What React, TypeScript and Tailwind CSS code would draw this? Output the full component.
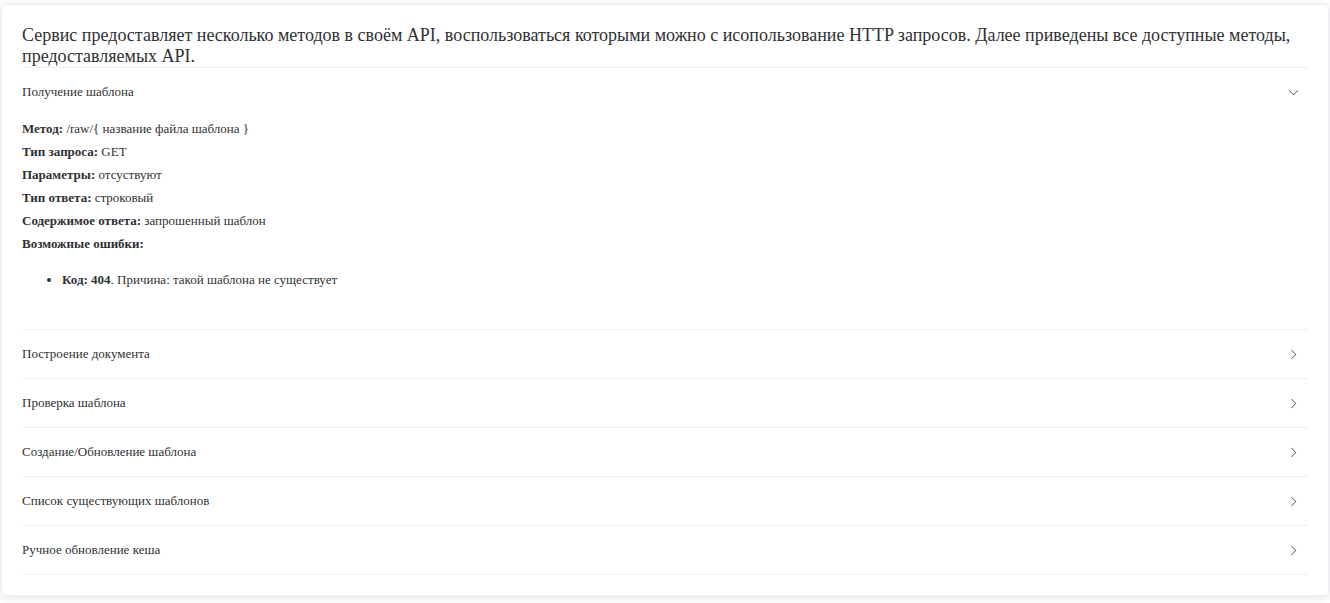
import { useState } from "react";

const sections = [
  "Получение шаблона",
  "Построение документа",
  "Проверка шаблона",
  "Создание/Обновление шаблона",
  "Список существующих шаблонов",
  "Ручное обновление кеша",
];

const details = [
  ["Метод:", "/raw/{ название файла шаблона }"],
  ["Тип запроса:", "GET"],
  ["Параметры:", "отсуствуют"],
  ["Тип ответа:", "строковый"],
  ["Содержимое ответа:", "запрошенный шаблон"],
  ["Возможные ошибки:", ""],
];

function Arrow({ open }: { open: boolean }) {
  return (
    <svg
      viewBox="0 0 1024 1024"
      className={`mr-2 size-[13px] fill-[#505668] ${open ? "rotate-90" : ""}`}
      aria-hidden="true"
    >
      <path d="M340.864 149.312a30.592 30.592 0 0 0 0 42.752L652.736 512 340.864 831.872a30.592 30.592 0 0 0 0 42.752 29.12 29.12 0 0 0 41.728 0L714.24 534.336a32 32 0 0 0 0-44.672L382.592 149.376a29.12 29.12 0 0 0-41.728 0z" />
    </svg>
  );
}

export default function App() {
  const [active, setActive] = useState(0);
  return (
    <main className="px-px pt-1 pb-2 font-['Liberation_Serif',serif] text-[#303133]">
      <div className="rounded border border-[#ebeef5] bg-white p-5 shadow-[0_2px_12px_0_rgba(0,0,0,0.1)]">
        <p className="text-lg leading-[21px]">
          Сервис предоставляет несколько методов в своём API, воспользоваться которыми можно с
          исопользование HTTP запросов. Далее приведены все доступные методы, предоставляемых API.
        </p>
        <div className="border-y border-[#ebeef5]">
          {sections.map((title, i) => (
            <section key={title} className="border-b border-[#ebeef5] last:border-b-0">
              <button
                type="button"
                aria-expanded={active === i}
                onClick={() => setActive(active === i ? -1 : i)}
                className="flex h-12 w-full cursor-pointer items-center justify-between text-left text-[13px]"
              >
                {title}
                <Arrow open={active === i} />
              </button>
              {active === i && i === 0 && (
                <div className="pt-px pb-[25px] text-[13px] leading-[23px]">
                  {details.map(([label, value]) => (
                    <div key={label}>
                      <b>{label}</b> {value}
                    </div>
                  ))}
                  <ul className="my-[13px] list-disc pl-10">
                    <li>
                      <b>Код: 404</b>. Причина: такой шаблона не существует
                    </li>
                  </ul>
                </div>
              )}
            </section>
          ))}
        </div>
      </div>
    </main>
  );
}
